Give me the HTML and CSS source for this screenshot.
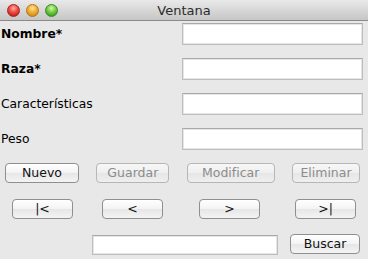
FILE: index.html
```html
<!DOCTYPE html>
<html lang="es">
<head>
<meta charset="utf-8">
<title>Ventana</title>
<link rel="stylesheet" href="styles.css">
</head>
<body>
<div class="window">
  <div class="titlebar">
    <div class="lights">
      <span class="light red"></span>
      <span class="light yellow"></span>
      <span class="light green"></span>
    </div>
    <div class="title">Ventana</div>
    <div></div>
  </div>
  <div class="content">
    <div class="form">
      <label class="label bold">Nombre*</label><div class="field"></div>
      <label class="label bold">Raza*</label><div class="field"></div>
      <label class="label">Características</label><div class="field"></div>
      <label class="label">Peso</label><div class="field"></div>
    </div>
    <div class="actions">
      <button class="btn w-nuevo">Nuevo</button>
      <button class="btn w-guardar" disabled>Guardar</button>
      <button class="btn w-modificar" disabled>Modificar</button>
      <button class="btn w-eliminar" disabled>Eliminar</button>
    </div>
    <div class="nav">
      <div class="navcell"><button class="btn nb">|&lt;</button></div>
      <div class="navcell"><button class="btn nb">&lt;</button></div>
      <div class="navcell"><button class="btn nb">&gt;</button></div>
      <div class="navcell"><button class="btn nb">&gt;|</button></div>
    </div>
    <div class="search">
      <div class="field sfield"></div>
      <button class="btn buscar">Buscar</button>
    </div>
  </div>
</div>
</body>
</html>
```

FILE: styles.css
```css
html, body {
  margin: 0;
  padding: 0;
  background: #e8e8e8;
  font-family: "DejaVu Sans", "Liberation Sans", sans-serif;
  font-size: 12.3px;
  color: #000;
  overflow: hidden;
}

.window {
  width: 368px;
  height: 259px;
  background: #e8e8e8;
}

.titlebar {
  height: 20px;
  display: grid;
  grid-template-columns: 1fr auto 1fr;
  align-items: center;
  background: linear-gradient(#e9e9e9, #d4d4d4 60%, #c6c6c6);
  border-bottom: 1px solid #8a8a8a;
}

.lights {
  display: flex;
  gap: 6px;
  padding-left: 7px;
  align-items: center;
  padding-top: 1px;
}

.light {
  width: 13px;
  height: 13px;
  border-radius: 50%;
  box-sizing: border-box;
}
.red {
  background: radial-gradient(circle at 50% 30%, #ffb0a8 0%, #f0534a 40%, #c8221d 80%, #9d1410 100%);
  border: 1px solid #a4231e;
}
.yellow {
  background: radial-gradient(circle at 50% 30%, #ffe2a0 0%, #f2b43a 40%, #d28d14 80%, #a8680c 100%);
  border: 1px solid #b0741a;
}
.green {
  background: radial-gradient(circle at 50% 30%, #d8f7b0 0%, #7bd14a 40%, #3f9e22 80%, #2d7a15 100%);
  border: 1px solid #3d8b25;
}

.title {
  font-size: 13px;
  color: #2b2b2b;
  padding-top: 1px;
}

.content {
  padding-top: 2px;
}

.form {
  display: grid;
  grid-template-columns: 182px 181px;
  grid-auto-rows: 22px;
  row-gap: 13px;
}

.label {
  display: flex;
  align-items: center;
  padding-left: 1px;
}
.bold {
  font-weight: bold;
}

.field {
  box-sizing: border-box;
  background: #fff;
  border: 1px solid #bdbdbd;
  border-top-color: #a9a9a9;
  box-shadow: inset 0 0 0 1px #e6e6e6;
}

.btn {
  box-sizing: border-box;
  height: 20px;
  padding: 0;
  font-family: "DejaVu Sans", "Liberation Sans", sans-serif;
  font-size: 12.5px;
  color: #111;
  background: linear-gradient(#ffffff, #f3f3f3 50%, #e6e6e6 51%, #f4f4f4);
  border: 1px solid #8f8f8f;
  border-radius: 4px;
  line-height: 18px;
}
.btn:disabled {
  color: #8c8c8c;
  border-color: #b6b6b6;
  background: linear-gradient(#f7f7f7, #efefef 50%, #e6e6e6 51%, #efefef);
}

.actions {
  display: flex;
  margin-top: 13px;
  padding-left: 5px;
  padding-right: 8px;
  justify-content: space-between;
}
.w-nuevo { width: 74px; }
.w-guardar { width: 73px; }
.w-modificar { width: 88px; }
.w-eliminar { width: 68px; }

.nav {
  display: grid;
  grid-template-columns: 90px 97px 96px 85px;
  margin-top: 16px;
}
.navcell {
  padding-left: 12px;
}
.nb {
  width: 61px;
}

.search {
  display: flex;
  align-items: flex-start;
  margin-top: 15px;
  padding-left: 92px;
  gap: 12px;
}
.sfield {
  width: 186px;
  height: 20px;
  margin-top: 1px;
}
.buscar {
  width: 70px;
}
```
